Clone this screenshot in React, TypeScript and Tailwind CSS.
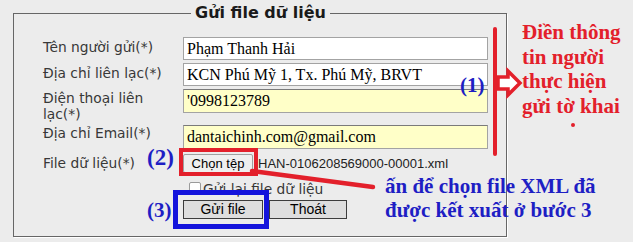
import React from 'react';

function Label({ children, className }: { children: React.ReactNode; className: string }) {
    return (
        <div className={`w-[140px] shrink-0 pr-[10px] text-[13.8px] leading-[16px] text-[#383838] ${className}`}>
            {children}
        </div>
    );
}

function TextBox({ value, yellow }: { value: string; yellow?: boolean }) {
    return (
        <input
            readOnly
            defaultValue={value}
            className={`w-[305px] border border-[#a3a3a3] pl-[3px] font-['Liberation_Serif',serif] text-[16px] text-black outline-none ${
                yellow ? 'h-[24px] bg-[#ffffc8] border-t-[#7a7a7a]' : 'h-[23px] bg-white'
            }`}
        />
    );
}

export default function App() {
    return (
        <div className="relative h-[242px] w-[633px] overflow-hidden bg-[#ececec] font-['DejaVu_Sans',sans-serif]">
            {/* Form */}
            <fieldset className="ml-[13px] mt-[3px] h-[234px] w-[494px] border border-[#666] pl-[29px] pt-[14px] shadow-[1px_1px_0_#fff]">
                <legend className="ml-[148px] px-[4px] text-[16px] font-bold leading-[20px] text-[#1a1a1a]">
                    Gửi file dữ liệu
                </legend>

                <div className="flex h-[26px] items-start">
                    <Label className="pt-[2px]">Tên người gửi(*)</Label>
                    <TextBox value="Phạm Thanh Hải" />
                </div>
                <div className="flex h-[26px] items-start">
                    <Label className="pt-[2px]">Địa chỉ liên lạc(*)</Label>
                    <TextBox value="KCN Phú Mỹ 1, Tx. Phú Mỹ, BRVT" />
                </div>
                <div className="flex h-[36px] items-start">
                    <Label className="pt-[1px]">Điện thoại liên lạc(*)</Label>
                    <TextBox value="'0998123789" yellow />
                </div>
                <div className="flex h-[26px] items-start">
                    <Label className="pt-0">Địa chỉ Email(*)</Label>
                    <TextBox value="dantaichinh.com@gmail.com" yellow />
                </div>
                <div className="flex h-[30px] items-start">
                    <Label className="pt-[4px]">File dữ liệu(*)</Label>
                    <div className="flex items-center pt-[3px]">
                        <button className="h-[19px] w-[70px] rounded-[2px] border border-[#a0a0a0] bg-[#efefef] font-['Liberation_Sans',sans-serif] text-[13px] leading-[17px] text-black">
                            Chọn tệp
                        </button>
                        <span className="ml-[5px] font-['Liberation_Sans',sans-serif] text-[13px] text-[#222]">
                            HAN-0106208569000-00001.xml
                        </span>
                    </div>
                </div>
                <div className="flex h-[19px] items-start pl-[146px]">
                    <span className="mt-[1px] h-[12px] w-[12px] rounded-[2px] border border-[#9a9a9a] bg-white" />
                    <span className="ml-[2px] text-[13.8px] leading-[16px] text-[#383838]">Gửi lại file dữ liệu</span>
                </div>
                <div className="flex gap-[6px] pl-[140px]">
                    <button className="h-[19px] w-[80px] border border-[#3c3c3c] bg-[#dedede] font-['Liberation_Sans',sans-serif] text-[14px] leading-[17px] text-black">
                        Gửi file
                    </button>
                    <button className="h-[19px] w-[78px] border border-[#3c3c3c] bg-[#dedede] font-['Liberation_Sans',sans-serif] text-[14px] leading-[17px] text-black">
                        Thoát
                    </button>
                </div>
            </fieldset>

            {/* Annotation boxes */}
            <div className="absolute left-[179px] top-[148px] h-[28px] w-[79px] border-[4px] border-[#e3202b]" />
            <div className="absolute left-[173px] top-[190px] h-[39px] w-[96px] border-[5px] border-[#1414dc]" />

            {/* Annotation strokes */}
            <svg className="pointer-events-none absolute left-0 top-0" width="633" height="242" viewBox="0 0 633 242">
                <line x1="252" y1="171" x2="373" y2="187" stroke="#e3202b" strokeWidth="4.5" strokeLinecap="round" />
                <line x1="495" y1="29" x2="495" y2="154" stroke="#e3202b" strokeWidth="4" strokeLinecap="round" />
                <polygon
                    points="498,77 508,77 508,71 520,83 508,95 508,89 498,89"
                    fill="#fff"
                    stroke="#e3202b"
                    strokeWidth="3.5"
                    strokeLinejoin="miter"
                />
                <circle cx="573" cy="125" r="2" fill="#e3202b" />
            </svg>

            {/* Step numbers */}
            <span className="absolute left-[460px] top-[73px] font-['Liberation_Serif',serif] text-[21px] font-bold leading-[24px] text-[#1e1ec4]">
                (1)
            </span>
            <span className="absolute left-[147px] top-[146px] font-['Liberation_Serif',serif] text-[23px] font-bold leading-[24px] text-[#1e1ec4]">
                (2)
            </span>
            <span className="absolute left-[147px] top-[198px] font-['Liberation_Serif',serif] text-[21px] font-bold leading-[24px] text-[#1e1ec4]">
                (3)
            </span>

            {/* Notes */}
            <div className="absolute left-[522px] top-[20px] font-['Liberation_Serif',serif] text-[21px] font-bold leading-[24.5px] text-[#e3202b]">
                <div>Điền thông</div>
                <div>tin người</div>
                <div>thực hiện</div>
                <div>gửi tờ khai</div>
            </div>
            <div className="absolute left-[385px] top-[174px] font-['Liberation_Serif',serif] text-[21px] font-bold leading-[24px] text-[#1e1ec4]">
                <div>ấn để chọn file XML đã</div>
                <div>được kết xuất ở bước 3</div>
            </div>
        </div>
    );
}
